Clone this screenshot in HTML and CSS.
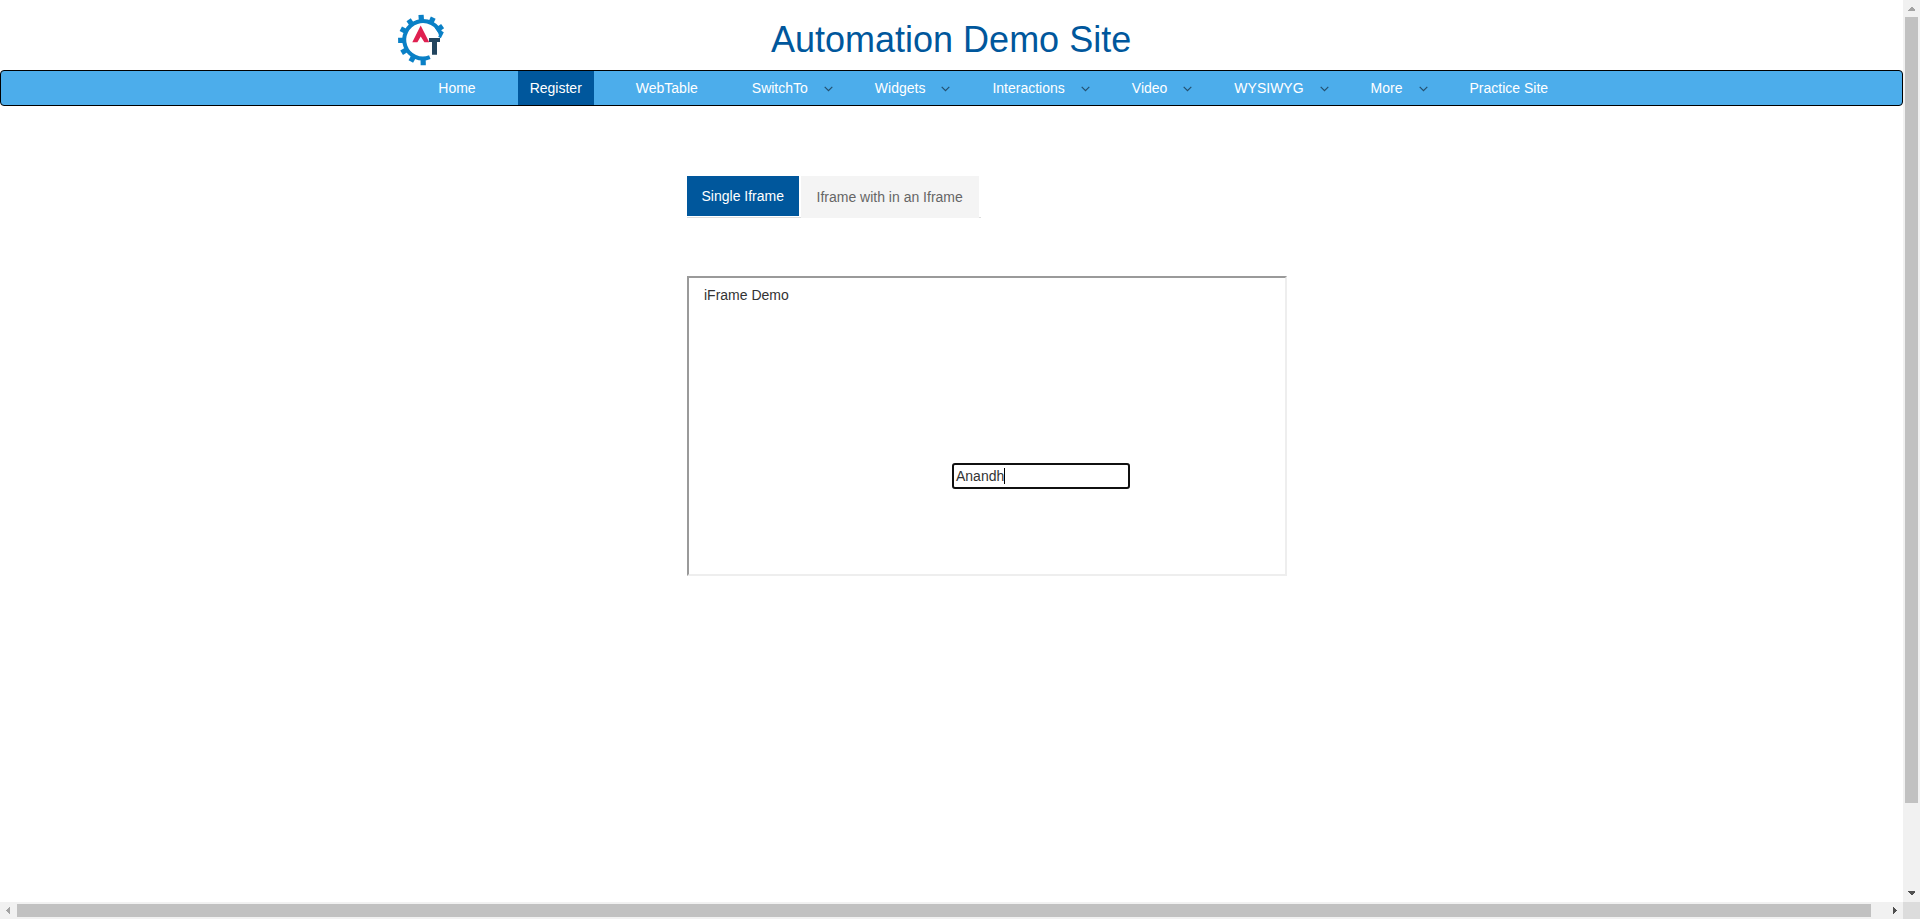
FILE: index.html
```html
<!DOCTYPE html>
<html lang="en">
<head>
<meta charset="utf-8">
<title>Frames</title>
<link rel="stylesheet" href="styles.css">
</head>
<body>
<svg class="defs" width="0" height="0">
  <symbol id="chevron" viewBox="0 0 9 6"><path d="M.7 .8 4.5 4.6 8.3 .8" fill="none" stroke="#24506f" stroke-width="1.2"/></symbol>
</svg>
<div class="window">
  <main class="page">
    <header class="header">
      <svg class="logo" viewBox="0 0 48 52">
        <g stroke="#0a80c6" fill="none">
          <path d="M31.8 43.2A18.7 18.7 0 1 1 42.9 20.6" stroke-width="4"/>
          <g stroke-width="5.2">
            <path d="M43.5 26H50" transform="rotate(89 24.8 26)"/>
            <path d="M43.5 26H49.5" transform="rotate(119 24.8 26)"/>
            <path d="M43.5 26H49.5" transform="rotate(149 24.8 26)"/>
            <path d="M43.5 26H49.5" transform="rotate(179 24.8 26)"/>
            <path d="M43.5 26H49.5" transform="rotate(207 24.8 26)"/>
            <path d="M43.5 26H49.5" transform="rotate(235 24.8 26)"/>
            <path d="M43.5 26H50" transform="rotate(266 24.8 26)"/>
            <path d="M43.5 26H49.5" transform="rotate(295 24.8 26)"/>
            <path d="M41.5 26H49" transform="rotate(325 24.8 26)"/>
            <path d="M41.5 23.5 44.5 17.5" stroke-width="3"/>
          </g>
        </g>
        <path d="M22.7 11.6 31.2 28.2H26.4L22.7 22.4 19.4 28.2H14.3Z" fill="#df2050"/>
        <path d="M31 24H42V28H39V40.7H34V28H31Z" fill="#22455f"/>
      </svg>
      <h1 class="title">Automation Demo Site</h1>
    </header>
    <nav class="nav">
      <a class="link">Home</a>
      <a class="link active">Register</a>
      <a class="link">WebTable</a>
      <a class="link menu">SwitchTo<svg class="chev"><use href="#chevron"/></svg></a>
      <a class="link menu">Widgets<svg class="chev"><use href="#chevron"/></svg></a>
      <a class="link menu">Interactions<svg class="chev"><use href="#chevron"/></svg></a>
      <a class="link menu">Video<svg class="chev"><use href="#chevron"/></svg></a>
      <a class="link menu">WYSIWYG<svg class="chev"><use href="#chevron"/></svg></a>
      <a class="link menu">More<svg class="chev"><use href="#chevron"/></svg></a>
      <a class="link">Practice Site</a>
    </nav>
    <section class="content">
      <div class="tabs">
        <a class="tab selected">Single Iframe</a>
        <a class="tab">Iframe with in an Iframe</a>
      </div>
      <div class="frame">
        <h5 class="caption">iFrame Demo</h5>
        <div class="field">Anandh<span class="caret"></span></div>
      </div>
    </section>
  </main>
  <div class="vbar">
    <svg class="arrow" viewBox="0 0 17 17"><path d="M5 11V10L8.5 6.5 12 10V11Z" fill="#a3a3a3"/></svg>
    <div class="vthumb"></div>
    <svg class="arrow end" viewBox="0 0 17 17"><path d="M5 6V7L8.5 10.5 12 7V6Z" fill="#505050"/></svg>
  </div>
  <div class="hbar">
    <svg class="arrow" viewBox="0 0 17 17"><path d="M10 5V12L6 8.5Z" fill="#a3a3a3"/></svg>
    <div class="hthumb"></div>
    <svg class="arrow end" viewBox="0 0 17 17"><path d="M7 5V12L11 8.5Z" fill="#505050"/></svg>
  </div>
  <div class="corner"></div>
</div>
</body>
</html>
```
FILE: styles.css
```css
* { box-sizing: border-box; }
body {
  margin: 0;
  overflow: hidden;
  background: #fff;
  color: #333;
  font: 14px/20px "Liberation Sans", Arial, sans-serif;
}
.defs { display: block; }
.window {
  display: grid;
  grid-template: 902px 17px / 1903px 17px;
}
.header {
  display: flex;
  height: 70px;
  padding: 14px 0 0 398px;
}
.logo { width: 48px; height: 52px; }
.title {
  margin: 6px 0 0 325px;
  font-size: 36px;
  font-weight: 400;
  line-height: 40px;
  color: #00579c;
  white-space: nowrap;
}
.nav {
  display: flex;
  gap: 30px;
  height: 36px;
  padding-left: 425.3px;
  border: 1px solid #000;
  border-radius: 4px;
  background: #4cadeb;
}
.link {
  display: flex;
  align-items: center;
  padding: 0 12px;
  color: #fff;
  white-space: nowrap;
}
.link.menu { padding-right: 0; }
.link.active { background: #00579c; }
.chev { width: 9px; height: 6px; margin: 1px 0 0 16px; }
.content { padding: 70px 0 0 687px; }
.tabs {
  display: flex;
  align-items: flex-start;
  gap: 2px;
  width: 294px;
  height: 42px;
  border-bottom: 1px solid #ddd;
}
.tab {
  width: 178px;
  height: 42px;
  padding: 11px 0 0 15.5px;
  background: #f4f4f4;
  color: #666;
  white-space: nowrap;
}
.tab.selected {
  width: 112px;
  height: 40px;
  padding: 10px 0 0 14.5px;
  background: #00579c;
  color: #fff;
}
.frame {
  width: 600px;
  height: 300px;
  margin-top: 58px;
  border: 2px solid;
  border-color: #9a9a9a #eee #eee #9a9a9a;
}
.caption {
  margin: 7px 0 0 15px;
  font-size: 14px;
  font-weight: 400;
}
.field {
  display: flex;
  align-items: center;
  width: 178px;
  height: 26px;
  margin: 158px 0 0 263px;
  padding-left: 2px;
  border: 2px solid #101010;
  border-radius: 3px;
}
.caret { width: 1px; height: 16px; background: #000; }
.vbar { display: flex; flex-direction: column; align-items: center; background: #f1f1f1; }
.hbar { display: flex; align-items: center; background: #f1f1f1; }
.arrow { width: 17px; height: 17px; flex: none; shape-rendering: crispEdges; }
.vthumb { width: 13px; height: 786px; margin-bottom: auto; background: #c1c1c1; }
.hthumb { width: 1854px; height: 13px; margin-right: auto; background: #c1c1c1; }
.corner { background: #dcdcdc; }
```
